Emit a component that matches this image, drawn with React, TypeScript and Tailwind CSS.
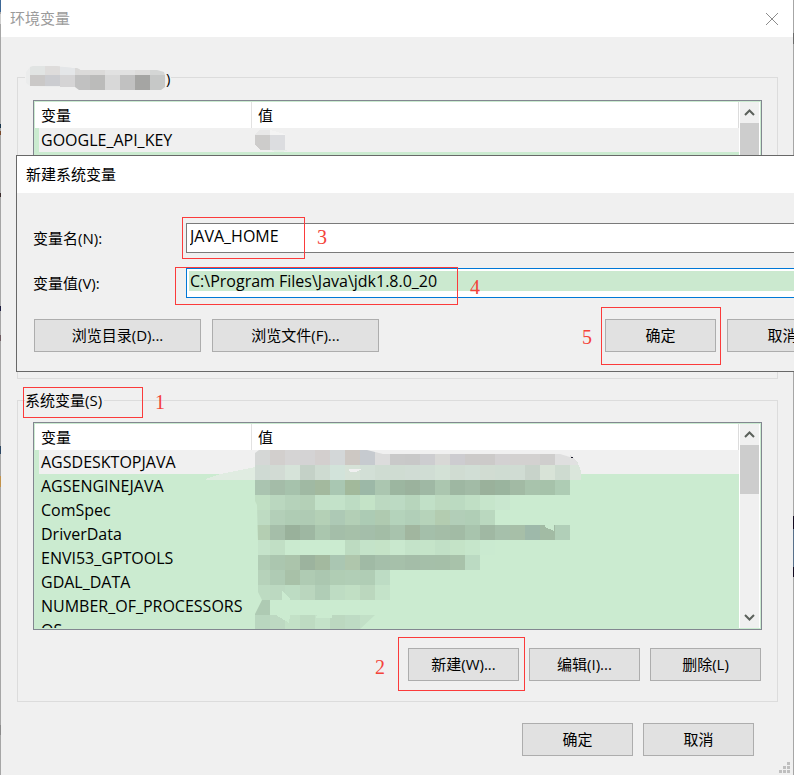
import type { ReactNode } from "react";

type Cell = [x: number, y: number, w: number, h: number, color: string];

/* Pixelated blocks, one string of hex colours per 15px band ("-" leaves a gap). */
const bands: string[] = [
  "d5d7d6 d2cfcd d5d4d4 d4d3d4 d3cfce d3d7d8 cdc8c3 c6cacf dcdcdc c9c9c9 c8c8c8 cdcdd0 d8d8d6 cdccd0 cccac9 cccac9 d3d1d2 d3d1d0 d3d1d0 cfcecd dfdfdf",
  "cfdad3 d2dbd4 d6e3d9 c4d1c7 cedbd1 d2e3da d6e2d7 d2dfd6 cfdcd2 cfdcd2 d0dcd4 d0ddd4 d3e1d6 d0dcd2 d1ded5 d1dcd2 cfdcd2 d0dcd3 c8d3ca d8e3d7 cedbd0",
  "aac4b0 a4bca8 a6c2ac a0b9a3 a3b99e a9c7b2 a2b99b 9cb8a7 abc6b0 9cb6a0 9bb29d 9fb8a4 abc6af 9eb7a2 a2bba6 9ab19b 9ab49e a2baa4 a8c3ac a6c2aa aeccb4",
  "c0dfc3 bad7bf b5d2ba b4d0b7 c3e1c8 c3e2c9 bddcc3 c4e3c7 bcd9c1 bcdac3 b7d5bc c1e0c7 bddac0 bbdac1 c0dfc5 c6e5cb c9e7cf - - - -",
  "bedbc2 b3cfb8 afccb4 afcbb4 b4d0b6 adc9b5 b3cfb6 accbb4 afcab0 b4d3bb b1cfb8 b6d3ba b3ccb0 b2ceb8 b0ceb6 bad8bf - - - - -",
  "b4ceb2 a5bea9 99b19b 9eb7a2 aac6ae a4bea9 a6c0a9 a4beaa a3bda6 a8c3ad a1b69f a4bfaa a4bda7 a2bba5 a8c4ad a0b8a3 a6c0ab a7bfa8 9eb9aa a2bba4 b1cfb8",
  "c5e3ca c1dfc5 caeacf - - - bddbc1 c4e3c9 c5e3c7 c9e8ce c4e3c9 c5e4c9 c1e0c6 c4e3c7 c6e6cb caead0 - - - - -",
  "b1cdb5 abc6af abc4ab 9cb39e a3b99f aac6b2 afc6ac a0baa5 a5bfaa a6c0aa a4bda8 a5bfa9 a5bfa8 a8c2aa bbdac2 - - - - - -",
  "b6d2ba afcbb4 a8c1a8 afcbb3 abc7b0 b0cdb4 b1ceb6 b0cdb5 bddcc4 - - - - - - - - - - - -",
  "bddbc2 bcd9c1 bddcc3 bad6be b0cdb6 bedcc3 c1dfc4 bbd7be c4e3c9 - - - - - - - - - - - -",
  "aecab3 - - - - - - - - - - - - - - - - - - - -",
  "b9d6bf bdd9c2 c3e1c7 bedbc2 c4e2c9 bcd8c0 bedbc4 c2e0c7 - - - - - - - - - - - - -",
];

const nameCells: Cell[] = [
  [5, 0, 15, 9, "#e1e4e3"],
  [20, 0, 15, 9, "#dedcdb"],
  [35, 1, 15, 8, "#e4e6e8"],
  [50, 2, 5, 7, "#dad9d8"],
  [54, 4, 26, 5, "#dbdad9"],
  [80, 4, 30, 5, "#e1e1e1"],
  [110, 4, 15, 5, "#dddcdb"],
  [125, 4, 15, 5, "#d4d6d5"],
  [5, 9, 15, 11, "#cac8c7"],
  [20, 9, 15, 11, "#cbccd0"],
  [35, 9, 15, 12, "#d5d4d5"],
  [50, 9, 15, 15, "#c1c1c1"],
  [65, 9, 15, 15, "#bbbbba"],
  [80, 9, 15, 15, "#d8d8d8"],
  [95, 9, 15, 15, "#c1c1c1"],
  [110, 9, 15, 15, "#a5a5a3"],
  [125, 9, 15, 15, "#c6c8c7"],
];

function NameMosaic() {
  return (
    <svg width="141" height="24" viewBox="0 0 141 24" className="block shrink-0" shapeRendering="crispEdges">
      <clipPath id="name-shape">
        <path d="M5 1 8 0H32L48 2H52L56 4H132L139 6 141 13 140 21 136 24H54L50 21H24L5 20 1 17V6Z" />
      </clipPath>
      <g clipPath="url(#name-shape)">
        <rect width="142" height="24" fill="#ebecec" />
        {nameCells.map(([x, y, w, h, color]) => (
          <rect key={`${x}-${y}`} x={x} y={y} width={w} height={h} fill={color} />
        ))}
      </g>
    </svg>
  );
}

function ValueMosaic() {
  return (
    <svg width="36" height="24" viewBox="0 0 36 24" className="block" shapeRendering="crispEdges">
      <path d="M1 6 6 2H16V7H1Z" fill="#e8e8e8" />
      <path d="M16 2 31 6V7H16Z" fill="#f4f4f4" />
      <path d="M1 7H16V22H7L1 17Z" fill="#cdcccb" />
      <path d="M16 7H31V22H16Z" fill="#dcdde0" />
      <path d="M17 22H35L28 24H21Z" fill="#e6eee7" />
    </svg>
  );
}

function ListMosaic() {
  return (
    <svg
      width="380"
      height="180"
      viewBox="205 450 380 180"
      className="absolute top-[27px] left-[171px]"
      shapeRendering="crispEdges"
    >
      <path d="M206 479 220 474 255 467V480H206Z" fill="#e0ece1" />
      <path d="M570 455 577 461 581 471V480H570Z" fill="#dae6db" />
      <path d="M570 455 577 461 578 465H570Z" fill="#e1e1e1" />
      <clipPath id="list-shape">
        <path d="M255 453 259 450H367L383 454H560L570 457V570H480L390 600 270 600V615H375L359 630H254L253 618 262 600 258 592V541L257 505 255 501Z" />
      </clipPath>
      <g clipPath="url(#list-shape)">
        {bands.map((band, row) =>
          band
            .split(" ")
            .map((hex, column) =>
              hex === "-" ? null : (
                <rect
                  key={`${row}-${column}`}
                  x={255 + column * 15}
                  y={450 + row * 15}
                  width="15"
                  height="15"
                  fill={`#${hex}`}
                />
              ),
            ),
        )}
      </g>
      <path d="M349 469 362 469 356 472H350Z" fill="#f0f0f0" />
      <path d="M545 525H554V531L545 527Z" fill="#cbebd0" />
      <path d="M282 590 290 599V600H282Z" fill="#cbebd0" />
      <path d="M276 615 289 623 290 615ZM317 615H332V618H316Z" fill="#cbebd0" />
      <rect x="571" y="457" width="2" height="1" fill="#1b1b2b" />
    </svg>
  );
}

function Mark({ n, box, digit }: { n: number; box: string; digit: string }) {
  return (
    <>
      <span className={`pointer-events-none absolute border border-[#fb3b3b] ${box}`} />
      <span
        className={`pointer-events-none absolute font-['Liberation_Serif',serif] text-xl leading-5 text-[#f4433a] ${digit}`}
      >
        {n}
      </span>
    </>
  );
}

function Button({ children, wide = false }: { children: ReactNode; wide?: boolean }) {
  return (
    <button
      type="button"
      className={`h-[33px] border border-[#adadad] bg-[#e1e1e1] pb-[2px] text-center ${wide ? "w-[167px]" : "w-[111px]"}`}
    >
      {children}
    </button>
  );
}

function Chevron({ down = false }: { down?: boolean }) {
  return (
    <svg width="19" height="21" viewBox="0 0 19 21" className="block" fill="none" stroke="#5b615b" strokeWidth="2">
      <path d={down ? "M5 8 9.500 12.500 14 8" : "M5 13 9.500 8.500 14 13"} />
    </svg>
  );
}

function VariableList({
  names,
  height,
  value,
  overlay,
}: {
  names: string[];
  height: string;
  value?: ReactNode;
  overlay?: ReactNode;
}) {
  return (
    <div className={`relative flex overflow-hidden border border-[#828790] bg-[#cbebd0] p-px ${height}`}>
      <div className="min-w-0 flex-1 overflow-hidden">
        <table className="w-full table-fixed border-separate border-spacing-0 text-left">
          <thead>
            <tr className="h-[26px] bg-white">
              <th className="w-[217px] border-r border-[#e2e2e2] p-0 pl-[6px] font-normal">变量</th>
              <th className="border-r border-[#dcdcdc] p-0 pl-[6px] font-normal">值</th>
            </tr>
          </thead>
          <tbody>
            {names.map((name, i) => (
              <tr key={name} className={i === 0 ? "h-6 bg-[#f0f0f0]" : "h-6"}>
                <td className="border-l-4 border-[#cbebd0] p-0 pl-[2px] text-base leading-6 whitespace-nowrap">
                  {name}
                </td>
                <td className="p-0 pl-[2px]">{i === 0 && value}</td>
              </tr>
            ))}
          </tbody>
        </table>
      </div>
      <div className="flex w-[21px] flex-col border-x border-white bg-[#f0f0f0]">
        <Chevron />
        <div className="h-[49px] bg-[#cdcdcd]" />
        <div className="mt-auto">
          <Chevron down />
        </div>
      </div>
      {overlay}
    </div>
  );
}

const systemNames = [
  "AGSDESKTOPJAVA",
  "AGSENGINEJAVA",
  "ComSpec",
  "DriverData",
  "ENVI53_GPTOOLS",
  "GDAL_DATA",
  "NUMBER_OF_PROCESSORS",
  "OS",
];

/* Slivers of the windows that lie behind the dialog's two sides. */
const leftSpecks: [number, number, string][] = [
  [0, 12, "#3d6796"],
  [14, 10, "#cfcfcf"],
  [124, 4, "#16334a"],
  [131, 4, "#7a4a2c"],
  [193, 4, "#3b2b2b"],
  [306, 5, "#1c1c40"],
  [335, 6, "#6e5a60"],
  [446, 8, "#2c4763"],
  [476, 11, "#c2924a"],
  [725, 10, "#8a8a8a"],
];
const rightSpecks: [number, number, string][] = [
  [33, 11, "#6a6a6a"],
  [516, 13, "#120a20"],
  [529, 38, "#58708a"],
  [567, 10, "#120a20"],
];

function Edge({ specks }: { specks: [number, number, string][] }) {
  return (
    <div className="w-px shrink-0 bg-[#a6a6a6]">
      <svg width="1" height="750" className="block" shapeRendering="crispEdges">
        {specks.map(([y, h, color]) => (
          <rect key={y} y={y} width="1" height={h} fill={color} />
        ))}
      </svg>
    </div>
  );
}

function NewVariableDialog() {
  return (
    <section
      aria-label="新建系统变量"
      className="absolute top-[155px] right-[-62px] left-4 border border-[#686868] bg-[#f0f0f0]"
    >
      <h2 className="flex h-[37px] items-center bg-white pb-[2px] pl-[9px]">新建系统变量</h2>
      <form className="px-4 pt-[30px] pb-[19px]">
        <div className="relative flex items-center">
          <label htmlFor="variable-name" className="w-[153px]">
            变量名(N):
          </label>
          <div className="h-[30px] flex-1 border border-[#7a7a7a] bg-white p-[2px]">
            <input
              id="variable-name"
              defaultValue="JAVA_HOME"
              className="block h-5 w-full pl-px text-base leading-5 outline-none"
            />
          </div>
          <Mark n={3} box="-top-[6px] left-[149px] h-[42px] w-[123px]" digit="top-1 left-[284px]" />
        </div>
        <div className="relative mt-[15px] flex items-center">
          <label htmlFor="variable-value" className="w-[153px]">
            变量值(V):
          </label>
          <div className="h-[30px] flex-1 border border-[#0078d7] bg-white p-[2px]">
            <input
              id="variable-value"
              defaultValue="C:\Program Files\Java\jdk1.8.0_20"
              className="block h-5 w-full bg-[#cbe9cf] pl-px text-base leading-5 outline-none"
            />
          </div>
          <Mark n={4} box="-top-px left-[142px] h-[38px] w-[283px]" digit="top-[9px] left-[437px]" />
        </div>
        <div className="mt-[21px] flex justify-between px-px">
          <div className="flex gap-[11px]">
            <Button wide>浏览目录(D)...</Button>
            <Button wide>浏览文件(F)...</Button>
          </div>
          <div className="flex gap-[11px]">
            <div className="relative">
              <Button>确定</Button>
              <Mark n={5} box="-top-3 -left-1 h-[58px] w-[120px]" digit="top-2 -left-[23px]" />
            </div>
            <Button>取消</Button>
          </div>
        </div>
      </form>
    </section>
  );
}

export default function App() {
  return (
    <div className="relative flex min-h-screen overflow-hidden bg-[#f0f0f0] font-['Open_Sans','Noto_Sans_CJK_SC',sans-serif] text-[15px] leading-5 text-black">
      <Edge specks={leftSpecks} />
      <main className="relative min-w-0 flex-1">
        <header className="flex h-[37px] items-center justify-between bg-white pr-[14px] pl-[9px]">
          <h1 className="pb-[2px] text-[#9b9b9b]">环境变量</h1>
          <button type="button" aria-label="关闭">
            <svg width="14" height="14" viewBox="0 0 14 14" className="block" stroke="#8c8c8c" strokeWidth="1">
              <path d="M1 1 13 13M13 1 1 13" />
            </svg>
          </button>
        </header>

        <div className="pt-[29px] pr-[15px] pl-4">
          <fieldset className="border border-[#dcdcdc] px-[15px] pb-4">
            <legend className="-ml-2 flex h-[22px] items-start pr-px">
              <NameMosaic />
              <span className="leading-6">)</span>
            </legend>
            <div className="pt-3">
              <VariableList names={["GOOGLE_API_KEY"]} height="h-[262px]" value={<ValueMosaic />} />
            </div>
          </fieldset>

          <fieldset className="mt-[10px] border border-[#dcdcdc] px-[15px] pb-5">
            <legend className="relative -ml-2 h-[22px] pr-[2px] leading-[22px]">
              系统变量(S)
              <Mark n={1} box="-top-[2px] -left-[2px] h-[31px] w-[120px]" digit="top-[3px] left-[130px]" />
            </legend>
            <div className="pt-[11px]">
              <VariableList names={systemNames} height="h-[208px]" overlay={<ListMosaic />} />
            </div>
            <div className="mt-[18px] flex justify-end gap-[10px] pr-px">
              <div className="relative">
                <Button>新建(W)...</Button>
                <Mark n={2} box="-top-[11px] -left-[10px] h-[54px] w-[127px]" digit="top-[9px] -left-[33px]" />
              </div>
              <Button>编辑(I)...</Button>
              <Button>删除(L)</Button>
            </div>
          </fieldset>
        </div>

        <footer className="flex justify-end gap-[10px] pt-[21px] pr-[39px] pb-[19px]">
          <Button>确定</Button>
          <Button>取消</Button>
        </footer>
        <svg
          width="11"
          height="11"
          viewBox="0 0 11 11"
          className="absolute right-[3px] bottom-[2px]"
          fill="#bfbfbf"
          shapeRendering="crispEdges"
        >
          <path d="M8 0h3v3h-3zM4 4h3v3h-3zM8 4h3v3h-3zM0 8h3v3h-3zM4 8h3v3h-3zM8 8h3v3h-3z" />
        </svg>
      </main>
      <Edge specks={rightSpecks} />
      <NewVariableDialog />
    </div>
  );
}
